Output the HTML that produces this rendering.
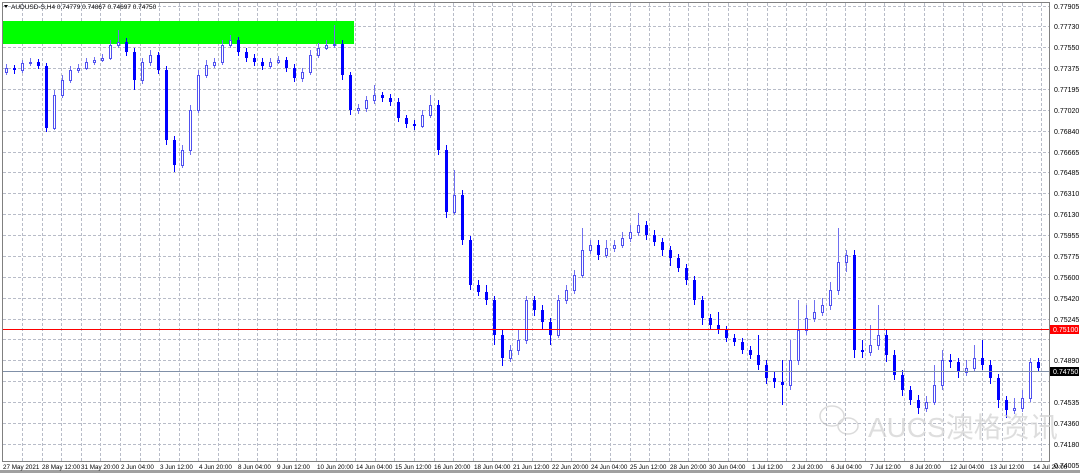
<!DOCTYPE html>
<html><head><meta charset="utf-8"><style>
html,body{margin:0;padding:0;background:#fff;width:1080px;height:473px;overflow:hidden}
svg{display:block}
text{font-family:"Liberation Sans",sans-serif;font-size:7px;fill:#000}
</style></head><body>
<svg width="1080" height="473" xmlns="http://www.w3.org/2000/svg">
<rect x="0" y="0" width="1080" height="473" fill="#fff"/>
<rect x="0" y="470" width="1080" height="3" fill="#a0a0a0"/>
<g stroke="#b8bcc8" stroke-dasharray="3,2" stroke-width="1">
<path d="M3 6.5H1049M3 26.5H1049M3 47.5H1049M3 68.5H1049M3 89.5H1049M3 110.5H1049M3 131.5H1049M3 152.5H1049M3 172.5H1049M3 193.5H1049M3 214.5H1049M3 235.5H1049M3 256.5H1049M3 277.5H1049M3 298.5H1049M3 319.5H1049M3 339.5H1049M3 360.5H1049M3 381.5H1049M3 402.5H1049M3 423.5H1049M3 444.5H1049"/>
<path d="M22.5 3V461M42.5 3V461M61.5 3V461M81.5 3V461M100.5 3V461M120.5 3V461M140.5 3V461M159.5 3V461M179.5 3V461M198.5 3V461M218.5 3V461M238.5 3V461M257.5 3V461M277.5 3V461M296.5 3V461M316.5 3V461M336.5 3V461M355.5 3V461M375.5 3V461M394.5 3V461M414.5 3V461M434.5 3V461M453.5 3V461M473.5 3V461M492.5 3V461M512.5 3V461M532.5 3V461M551.5 3V461M571.5 3V461M590.5 3V461M610.5 3V461M630.5 3V461M649.5 3V461M669.5 3V461M688.5 3V461M708.5 3V461M728.5 3V461M747.5 3V461M767.5 3V461M786.5 3V461M806.5 3V461M826.5 3V461M845.5 3V461M865.5 3V461M884.5 3V461M904.5 3V461M924.5 3V461M943.5 3V461M963.5 3V461M982.5 3V461M1002.5 3V461M1022.5 3V461M1041.5 3V461"/>
</g>
<rect x="2" y="21" width="352" height="23" fill="#00ff00"/>
<!-- bear wicks -->
<path stroke="#0000ff" fill="none" d="M14.5 65V74M38.5 59V69M46.5 63V132M126.5 38V56M134.5 48V90M158.5 52V74M166.5 66V145M174.5 136V172M238.5 37V56M246.5 48V62M254.5 54V66M262.5 58V70M286.5 57V72M294.5 64V82M342.5 40V80M350.5 72V115M382.5 92V102M390.5 94V106M398.5 98V122M406.5 115V128M414.5 120V130M438.5 100V155M446.5 145V218M462.5 190V245M470.5 236V290M478.5 280V296M486.5 285V305M494.5 296V345M502.5 330V366M534.5 296V316M542.5 305V330M550.5 318V345M598.5 240V260M646.5 221V240M654.5 230V246M662.5 238V256M670.5 246V266M678.5 254V272M686.5 264V285M694.5 276V305M702.5 296V325M710.5 314V330M718.5 312V334M726.5 326V342M734.5 334V346M742.5 338V354M750.5 346V359M758.5 335V370M766.5 360V384M774.5 372V388M782.5 360V405M854.5 250V358M862.5 340V358M886.5 330V362M894.5 350V380M902.5 370V396M910.5 386V405M918.5 395V414M950.5 354V368M958.5 358V378M982.5 340V370M990.5 360V384M998.5 374V408M1006.5 396V418M1038.5 358V372"/>
<path fill="#0000ff" d="M13 68h3v2h-3zM37 62h3v4h-3zM45 66h3v62h-3zM125 42h3v10h-3zM133 52h3v28h-3zM157 55h3v15h-3zM165 70h3v70h-3zM173 140h3v25h-3zM237 40h3v12h-3zM245 52h3v6h-3zM253 58h3v4h-3zM261 62h3v4h-3zM285 60h3v8h-3zM293 68h3v10h-3zM341 44h3v31h-3zM349 75h3v35h-3zM381 95h3v3h-3zM389 98h3v4h-3zM397 102h3v16h-3zM405 118h3v6h-3zM413 124h3v2h-3zM437 105h3v45h-3zM445 150h3v62h-3zM461 195h3v45h-3zM469 240h3v45h-3zM477 285h3v7h-3zM485 292h3v8h-3zM493 300h3v35h-3zM501 335h3v23h-3zM533 300h3v10h-3zM541 310h3v12h-3zM549 322h3v13h-3zM597 245h3v10h-3zM645 225h3v10h-3zM653 235h3v7h-3zM661 242h3v8h-3zM669 250h3v8h-3zM677 258h3v10h-3zM685 268h3v12h-3zM693 280h3v20h-3zM701 300h3v18h-3zM709 318h3v7h-3zM717 325h3v5h-3zM725 330h3v8h-3zM733 338h3v4h-3zM741 342h3v8h-3zM749 350h3v5h-3zM757 355h3v10h-3zM765 365h3v13h-3zM773 378h3v4h-3zM781 382h3v3h-3zM853 255h3v95h-3zM861 350h3v2h-3zM885 335h3v20h-3zM893 355h3v20h-3zM901 375h3v15h-3zM909 390h3v10h-3zM917 400h3v8h-3zM949 360h3v2h-3zM957 362h3v10h-3zM981 358h3v7h-3zM989 365h3v13h-3zM997 378h3v22h-3zM1005 400h3v10h-3zM1037 362h3v6h-3z"/>
<!-- bull wicks -->
<path stroke="#7070f0" fill="none" d="M6.5 64V75M22.5 60V73M30.5 58V66M54.5 90V130M62.5 75V98M70.5 66V83M78.5 64V73M86.5 58V70M94.5 57V65M102.5 54V62M110.5 40V60M118.5 30V48M142.5 58V84M150.5 50V66M182.5 145V168M190.5 105V155M198.5 70V113M206.5 60V78M214.5 58V68M222.5 40V65M230.5 35V48M270.5 58V69M278.5 56V64M302.5 68V82M310.5 50V75M318.5 43V58M326.5 40V50M334.5 25V48M358.5 104V114M366.5 96V112M374.5 85V104M422.5 110V128M430.5 95V118M454.5 170V215M510.5 345V362M518.5 330V355M526.5 296V344M558.5 295V338M566.5 285V304M574.5 270V294M582.5 228V278M590.5 240V254M606.5 240V258M614.5 240V252M622.5 232V248M630.5 225V242M638.5 213V236M790.5 340V390M798.5 300V365M806.5 305V335M814.5 300V322M822.5 298V316M830.5 282V310M838.5 228V295M846.5 250V272M870.5 325V356M878.5 305V350M926.5 396V412M934.5 365V405M942.5 350V390M966.5 360V376M974.5 345V372M1014.5 398V414M1022.5 390V412M1030.5 358V402"/>
<path fill="#fff" stroke="#5050f0" d="M5.5 68.5h2v4h-2zM21.5 63.5h2v7h-2zM29.5 62.5h2v1h-2zM53.5 95.5h2v33h-2zM61.5 80.5h2v15h-2zM69.5 70.5h2v10h-2zM77.5 68.5h2v2h-2zM85.5 62.5h2v6h-2zM93.5 60.5h2v2h-2zM101.5 58.5h2v2h-2zM109.5 45.5h2v13h-2zM117.5 42.5h2v3h-2zM141.5 62.5h2v18h-2zM149.5 55.5h2v7h-2zM181.5 150.5h2v15h-2zM189.5 110.5h2v40h-2zM197.5 75.5h2v35h-2zM205.5 65.5h2v10h-2zM213.5 62.5h2v3h-2zM221.5 45.5h2v17h-2zM229.5 40.5h2v5h-2zM269.5 62.5h2v4h-2zM277.5 60.5h2v2h-2zM301.5 72.5h2v6h-2zM309.5 55.5h2v17h-2zM317.5 48.5h2v7h-2zM325.5 45.5h2v3h-2zM333.5 44.5h2v1h-2zM357.5 108.5h2v2h-2zM365.5 100.5h2v8h-2zM373.5 95.5h2v5h-2zM421.5 115.5h2v11h-2zM429.5 105.5h2v10h-2zM453.5 195.5h2v17h-2zM509.5 350.5h2v8h-2zM517.5 340.5h2v10h-2zM525.5 300.5h2v40h-2zM557.5 300.5h2v35h-2zM565.5 290.5h2v10h-2zM573.5 275.5h2v15h-2zM581.5 250.5h2v25h-2zM589.5 245.5h2v5h-2zM605.5 248.5h2v7h-2zM613.5 245.5h2v3h-2zM621.5 238.5h2v7h-2zM629.5 232.5h2v6h-2zM637.5 225.5h2v7h-2zM789.5 360.5h2v25h-2zM797.5 330.5h2v30h-2zM805.5 318.5h2v12h-2zM813.5 312.5h2v6h-2zM821.5 305.5h2v7h-2zM829.5 290.5h2v15h-2zM837.5 262.5h2v28h-2zM845.5 255.5h2v7h-2zM869.5 345.5h2v7h-2zM877.5 335.5h2v10h-2zM925.5 402.5h2v6h-2zM933.5 385.5h2v17h-2zM941.5 360.5h2v25h-2zM965.5 368.5h2v4h-2zM973.5 358.5h2v10h-2zM1013.5 408.5h2v2h-2zM1021.5 398.5h2v10h-2zM1029.5 362.5h2v36h-2z"/>
<rect x="3" y="329" width="1046" height="1" fill="#ff0000"/>
<rect x="3" y="371" width="1046" height="1" fill="#8090a8"/>
<rect x="2.5" y="2.5" width="1047" height="459" fill="none" stroke="#808080"/>
<g>
<text x="1054" y="9">0.77905</text><text x="1054" y="29">0.77730</text><text x="1054" y="50">0.77550</text><text x="1054" y="71">0.77375</text><text x="1054" y="92">0.77195</text><text x="1054" y="113">0.77020</text><text x="1054" y="134">0.76840</text><text x="1054" y="155">0.76665</text><text x="1054" y="175">0.76485</text><text x="1054" y="196">0.76310</text><text x="1054" y="217">0.76130</text><text x="1054" y="238">0.75955</text><text x="1054" y="259">0.75775</text><text x="1054" y="280">0.75600</text><text x="1054" y="301">0.75420</text><text x="1054" y="322">0.75245</text><text x="1054" y="363">0.74890</text><text x="1054" y="405">0.74535</text><text x="1054" y="426">0.74360</text><text x="1054" y="447">0.74180</text><text x="1054" y="468">0.74005</text>
</g>
<g style="font-size:6.3px">
<text x="3" y="469" style="font-size:6.3px">27 May 2021</text><text x="42" y="469" style="font-size:6.3px">28 May 12:00</text><text x="81" y="469" style="font-size:6.3px">31 May 20:00</text><text x="121" y="469" style="font-size:6.3px">2 Jun 04:00</text><text x="160" y="469" style="font-size:6.3px">3 Jun 12:00</text><text x="199" y="469" style="font-size:6.3px">4 Jun 20:00</text><text x="238" y="469" style="font-size:6.3px">8 Jun 04:00</text><text x="277" y="469" style="font-size:6.3px">9 Jun 12:00</text><text x="317" y="469" style="font-size:6.3px">10 Jun 20:00</text><text x="356" y="469" style="font-size:6.3px">14 Jun 04:00</text><text x="395" y="469" style="font-size:6.3px">15 Jun 12:00</text><text x="434" y="469" style="font-size:6.3px">16 Jun 20:00</text><text x="474" y="469" style="font-size:6.3px">18 Jun 04:00</text><text x="513" y="469" style="font-size:6.3px">21 Jun 12:00</text><text x="552" y="469" style="font-size:6.3px">22 Jun 20:00</text><text x="591" y="469" style="font-size:6.3px">24 Jun 04:00</text><text x="630" y="469" style="font-size:6.3px">25 Jun 12:00</text><text x="670" y="469" style="font-size:6.3px">28 Jun 20:00</text><text x="709" y="469" style="font-size:6.3px">30 Jun 04:00</text><text x="752" y="469" style="font-size:6.3px">1 Jul 12:00</text><text x="792" y="469" style="font-size:6.3px">2 Jul 20:00</text><text x="831" y="469" style="font-size:6.3px">6 Jul 04:00</text><text x="870" y="469" style="font-size:6.3px">7 Jul 12:00</text><text x="910" y="469" style="font-size:6.3px">8 Jul 20:00</text><text x="950" y="469" style="font-size:6.3px">12 Jul 04:00</text><text x="990" y="469" style="font-size:6.3px">13 Jul 12:00</text><text x="1033" y="469" style="font-size:6.3px">14 Jul 20:00</text>
</g>
<text x="11" y="9" style="font-size:6.5px">AUDUSD-S,H4  0.74779 0.74867 0.74697 0.74750</text>
<path d="M4 5 L8 5 L6 8 Z" fill="#000"/>
<rect x="1050" y="325" width="29" height="9" fill="#ff0000"/>
<text x="1053" y="332" style="fill:#fff">0.75100</text>
<rect x="1050" y="367" width="29" height="9" fill="#000"/>
<text x="1053" y="374" style="fill:#fff">0.74750</text>
<g opacity="0.45" fill="none" stroke="#b0b0b0" stroke-width="1.5">
<ellipse cx="832" cy="416" rx="12" ry="10"/>
<ellipse cx="848" cy="426" rx="10" ry="8"/>
</g>
<text x="868" y="437" style="font-size:28px;fill:#d0d0d0;fill-opacity:0.7;font-family:'Liberation Sans','Noto Sans CJK SC',sans-serif">AUCS澳格资讯</text>
</svg>
</body></html>
